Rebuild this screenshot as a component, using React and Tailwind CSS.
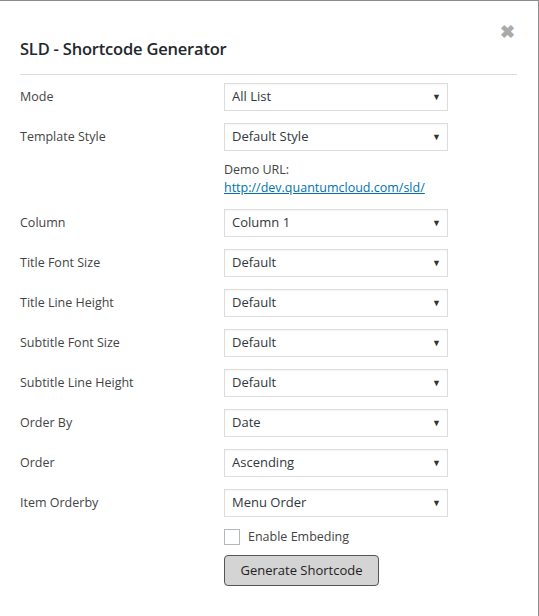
const rows = [
  ["Column", "Column 1"],
  ["Title Font Size", "Default"],
  ["Title Line Height", "Default"],
  ["Subtitle Font Size", "Default"],
  ["Subtitle Line Height", "Default"],
  ["Order By", "Date"],
  ["Order", "Ascending"],
  ["Item Orderby", "Menu Order"],
];

function Select({ value }) {
  return (
    <div className="w-[224px] h-[28px] border border-[#dddddd] bg-white flex items-center justify-between pl-[7px] pr-[6px] text-[13px] text-[#32373c] shadow-[inset_0_1px_2px_rgba(0,0,0,0.04)]">
      <span>{value}</span>
      <span className="text-[9px] text-[#333]">▼</span>
    </div>
  );
}

function Row({ label, value }) {
  return (
    <div className="flex items-center h-[28px]">
      <div className="w-[204px] text-[12.5px] text-[#444]">{label}</div>
      <Select value={value} />
    </div>
  );
}

export default function App() {
  return (
    <div
      className="w-[539px] h-[616px] bg-white border-t border-r border-[#8c8c8c] relative overflow-hidden"
      style={{ fontFamily: '"Open Sans", "Noto Sans", sans-serif' }}
    >
      <button className="absolute right-[23px] top-[21px] text-[#aaaaaa] text-[18px] font-bold leading-none">
        ✖
      </button>
      <div className="px-[20px] pt-[36px]">
        <h1 className="text-[16.5px] font-semibold text-[#23282d] leading-[24px] tracking-[-0.2px]">
          SLD - Shortcode Generator
        </h1>
        <div className="mt-[13px] mr-[1px] border-t border-[#dddddd]" />
        <div className="mt-[8px] flex flex-col gap-[12px]">
          <Row label="Mode" value="All List" />
          <Row label="Template Style" value="Default Style" />
        </div>
        <div className="ml-[204px] mt-[10px] text-[12.5px] text-[#444] leading-[18px]">
          <div>Demo URL:</div>
          <a href="#" className="text-[#0073aa] underline">
            http://dev.quantumcloud.com/sld/
          </a>
        </div>
        <div className="mt-[12px] flex flex-col gap-[12px]">
          {rows.map(([l, v]) => (
            <Row key={l} label={l} value={v} />
          ))}
        </div>
        <div className="ml-[204px] mt-[11px] flex items-center gap-[8px]">
          <div className="w-[16px] h-[16px] border border-[#b4b9be] bg-white" />
          <span className="text-[12.5px] text-[#444]">Enable Embeding</span>
        </div>
        <button className="ml-[204px] mt-[8px] w-[155px] h-[31px] bg-[#d4d4d4] border border-[#555] rounded-[4px] text-[13px] text-[#222]">
          Generate Shortcode
        </button>
      </div>
    </div>
  );
}
